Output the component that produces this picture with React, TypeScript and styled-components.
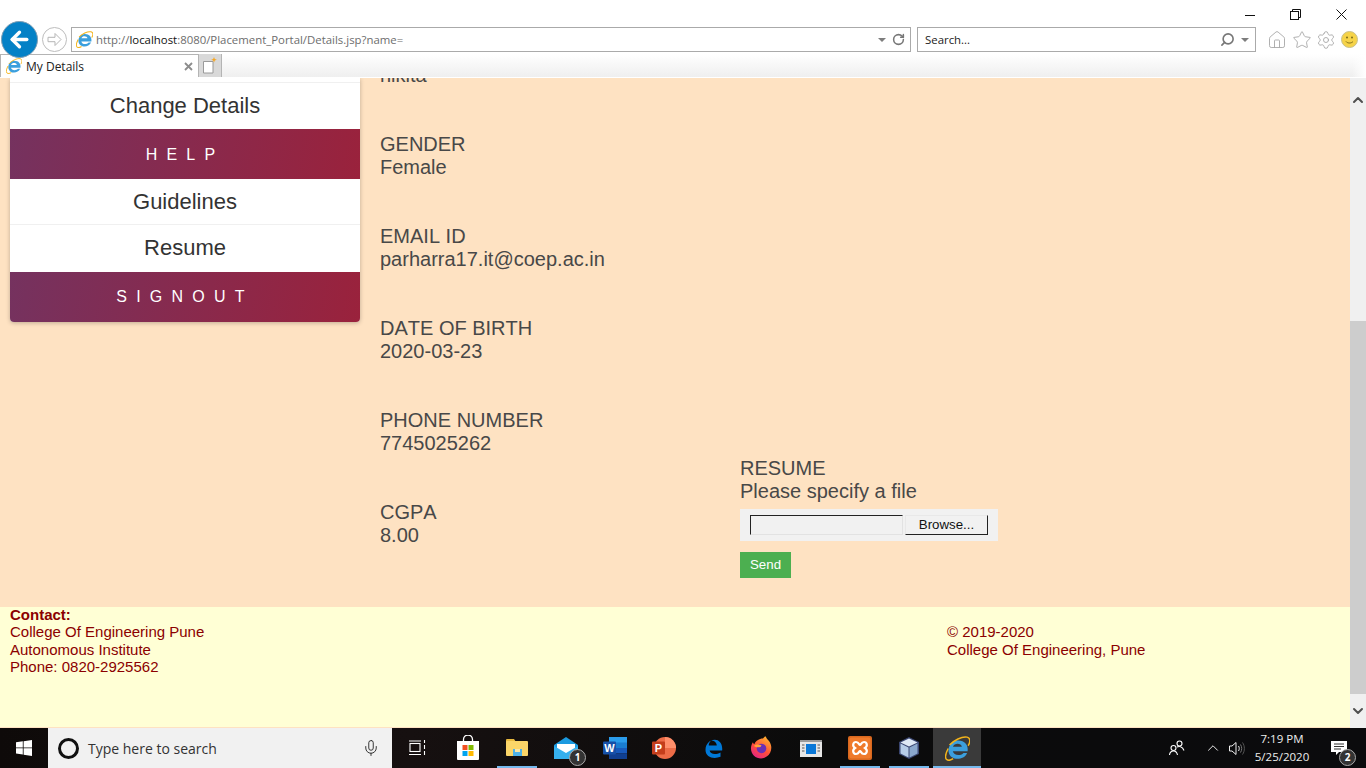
import styled, { createGlobalStyle } from 'styled-components';
import { ArrowLeft, ChevronDown, ChevronUp, House, Mic, RotateCw, Search, Settings, Star } from 'lucide-react';

const GlobalStyle = createGlobalStyle`
  html, body {
    margin: 0;
    padding: 0;
    height: 100%;
    overflow: hidden;
    background: #fff;
  }
  * { box-sizing: border-box; }
`;

const uiFont = `'Open Sans', 'Noto Sans', sans-serif`;
const pageFont = `'Liberation Sans', Arial, sans-serif`;

const Desktop = styled.div`
  width: 1366px;
  height: 768px;
  display: flex;
  flex-direction: column;
  overflow: hidden;
`;

/* browser chrome */
const TitleRow = styled.div`
  height: 27px;
  display: flex;
  justify-content: flex-end;
  padding-right: 2px;
  background: #fff;
`;

const WinButton = styled.div`
  width: 45.5px;
  height: 27px;
  display: flex;
  align-items: center;
  justify-content: center;
  padding-top: 2px;
`;

const NavRow = styled.div`
  height: 25px;
  display: flex;
  align-items: center;
  background: #fff;
  position: relative;
  z-index: 2;
`;

const BackButton = styled.div`
  width: 37px;
  height: 37px;
  margin: 0 4px 0 1px;
  border-radius: 50%;
  background: #0481c6;
  border: 1px solid #7f9fb5;
  display: flex;
  align-items: center;
  justify-content: center;
  color: #fff;
  flex: none;
`;

const ForwardButton = styled.div`
  width: 25px;
  height: 25px;
  margin-right: 4px;
  border-radius: 50%;
  border: 1px solid #bdbdbd;
  display: flex;
  align-items: center;
  justify-content: center;
  flex: none;
`;

const Field = styled.div<{ $width: number }>`
  width: ${(p) => p.$width}px;
  height: 25px;
  margin-right: 6px;
  border: 1px solid #aaa;
  background: #fff;
  display: flex;
  align-items: center;
  font: 11.4px ${uiFont};
  color: #6d6d6d;
  flex: none;
`;

const FieldIcon = styled.div`
  width: 24px;
  display: flex;
  justify-content: center;
  flex: none;
`;

const FieldText = styled.div`
  flex: 1;
  white-space: nowrap;
  strong { color: #111; font-weight: 400; }
`;

const SearchText = styled(FieldText)`
  color: #222;
  padding-left: 7px;
`;

const Caret = styled.span`
  width: 0;
  height: 0;
  border-left: 4px solid transparent;
  border-right: 4px solid transparent;
  border-top: 4px solid #7d7d7d;
  margin: 0 6px;
`;

const RefreshIcon = styled(RotateCw)`
  margin-right: 5px;
`;

const SearchIcon = styled(Search)`
  transform: scaleX(-1);
`;

const ToolIcons = styled.div`
  display: flex;
  align-items: center;
  gap: 4.5px;
  margin-left: 5px;
  color: #a9a9a9;
`;

const TabRow = styled.div`
  height: 24px;
  margin-top: 2px;
  display: flex;
  border-bottom: 1px solid #fff;
  background: linear-gradient(90deg, transparent 1352px, #fff 1366px), linear-gradient(#fff, #efefef);
`;

const Tab = styled.div`
  width: 199px;
  height: 23px;
  padding: 0 5px 0 5px;
  border-top: 1px solid #b4b4b4;
  border-right: 1px solid #b4b4b4;
  border-left: 1px solid #b4b4b4;
  background: #fff;
  display: flex;
  align-items: center;
  gap: 4px;
  font: 12px ${uiFont};
  color: #222;
`;

const TabTitle = styled.span`
  flex: 1;
`;

const NewTab = styled.div`
  width: 23px;
  height: 23px;
  background: #d9d9d9;
  border-right: 1px solid #b4b4b4;
  display: flex;
  align-items: center;
  justify-content: center;
`;

/* page */
const Viewport = styled.div`
  height: 650px;
  display: flex;
`;

const Page = styled.div`
  width: 1350px;
  display: flex;
  flex-direction: column;
  font-family: ${pageFont};
  font-kerning: none;
`;

const Main = styled.div`
  height: 529px;
  background: #fee2c2;
  display: flex;
  overflow: hidden;
  padding-left: 10px;
`;

const Sidebar = styled.nav`
  width: 350px;
  height: 244px;
  background: #fff;
  border-radius: 0 0 4px 4px;
  box-shadow: 0 1px 4px rgba(0, 0, 0, 0.25);
  display: flex;
  flex-direction: column;
  padding-top: 4px;
  flex: none;
`;

const SideLink = styled.div<{ $height: number; $line?: boolean; $lift?: number }>`
  height: ${(p) => p.$height}px;
  display: flex;
  align-items: center;
  justify-content: center;
  padding-bottom: ${(p) => p.$lift ?? 0}px;
  font-size: 22px;
  color: #333;
  border-top: ${(p) => (p.$line ? '1px solid #f0f0f0' : '0')};
`;

const SideHeader = styled.div<{ $last?: boolean }>`
  height: 50px;
  display: flex;
  align-items: center;
  justify-content: center;
  padding-top: ${(p) => (p.$last ? 0 : 1)}px;
  font-size: 16px;
  letter-spacing: 9.2px;
  color: #fff;
  background: linear-gradient(100deg, #75325f 0%, #9a223c 100%);
  border-radius: ${(p) => (p.$last ? '0 0 4px 4px' : '0')};
`;

const Details = styled.div`
  width: 360px;
  margin: -14px 0 0 20px;
  flex: none;
  font-size: 20px;
  line-height: 23px;
  color: #484848;
`;

const DetailGroup = styled.div`
  margin-bottom: 46px;
`;

const ResumeColumn = styled.div`
  align-self: flex-end;
  padding-bottom: 29px;
  font-size: 20px;
  line-height: 23px;
  color: #484848;
`;

const FileBox = styled.div`
  width: 258px;
  height: 32px;
  margin: 6px 0 11px;
  padding: 6px 10px;
  background: #f1f1f1;
  display: flex;
  gap: 2px;
`;

const FileName = styled.div`
  width: 153px;
  height: 20px;
  border: 1px solid #e2e2e2;
  border-top: 1px solid #222;
  border-left: 1px solid #222;
`;

const Browse = styled.div`
  width: 83px;
  height: 20px;
  border: 1px solid #e8e8e8;
  border-right: 1px solid #222;
  border-bottom: 1px solid #222;
  display: flex;
  align-items: center;
  justify-content: center;
  font-size: 13.3px;
  line-height: 1;
  color: #111;
`;

const SendButton = styled.div`
  width: 51px;
  height: 26px;
  padding-bottom: 2px;
  background: #4caf50;
  color: #fff;
  font-size: 13.3px;
  display: flex;
  align-items: center;
  justify-content: center;
`;

const Footer = styled.footer`
  height: 121px;
  background: #ffffd5;
  color: #8b0000;
  font-size: 15px;
  line-height: 17.3px;
  padding: 0 0 0 10px;
  display: flex;
  border-bottom: 1px solid #fee2c2;
`;

const FooterBlock = styled.div<{ $width?: number }>`
  width: ${(p) => (p.$width ? `${p.$width}px` : 'auto')};
  margin-top: -1px;
  flex: none;
`;

const ContactTitle = styled.div`
  font-weight: 700;
`;

const ScrollBar = styled.div`
  width: 16px;
  background: #f0f0f0;
  display: flex;
  flex-direction: column;
  align-items: center;
  color: #505050;
`;

const ScrollArrow = styled.div<{ $height: number }>`
  height: ${(p) => p.$height}px;
  display: flex;
  align-items: center;
  justify-content: center;
  flex: none;
`;

const ScrollGap = styled.div`
  flex: 1;
`;

const ScrollThumb = styled.div`
  width: 16px;
  height: 373px;
  background: #cdcdcd;
  flex: none;
`;

/* taskbar */
const Taskbar = styled.div`
  height: 40px;
  background: linear-gradient(90deg, #0e0a09, #161010 30%, #0b0b0b 60%, #0b0b0d);
  display: flex;
  align-items: stretch;
  color: #fff;
  font-family: ${uiFont};
`;

const StartButton = styled.div`
  width: 48px;
  display: flex;
  align-items: center;
  justify-content: center;
  flex: none;
`;

const SearchBox = styled.div`
  width: 344px;
  background: #f1f1f1;
  display: flex;
  align-items: center;
  padding: 0 12px 0 10px;
  color: #333;
  font-size: 14px;
  flex: none;
`;

const Cortana = styled.div`
  width: 21px;
  height: 21px;
  margin-right: 9px;
  border-radius: 50%;
  border: 3px solid #111;
`;

const SearchLabel = styled.span`
  flex: 1;
`;

const Slot = styled.div<{ $active?: boolean; $running?: boolean; $width?: number }>`
  width: ${(p) => p.$width ?? 49}px;
  display: flex;
  align-items: center;
  justify-content: center;
  flex: none;
  position: relative;
  background: ${(p) => (p.$active ? '#3a3a3a' : 'transparent')};
  &::after {
    content: '';
    display: ${(p) => (p.$running || p.$active ? 'block' : 'none')};
    position: absolute;
    left: ${(p) => (p.$active ? 0 : 5)}px;
    right: ${(p) => (p.$active ? 0 : 4)}px;
    bottom: 0;
    height: 2px;
    background: #76b9ed;
  }
`;

const IconBadge = styled.div`
  position: absolute;
  width: 17px;
  height: 17px;
  right: 4px;
  bottom: 2px;
  border-radius: 50%;
  background: #333;
  border: 1px solid #aaa;
  color: #fff;
  font-size: 10px;
  font-weight: 700;
  line-height: 15px;
  text-align: center;
`;

const Tray = styled.div`
  flex: 1;
  display: flex;
  align-items: center;
  padding-left: 183px;
`;

const TrayIcon = styled.div<{ $width: number; $gap?: number }>`
  width: ${(p) => p.$width}px;
  margin-left: ${(p) => p.$gap ?? 0}px;
  display: flex;
  justify-content: center;
  flex: none;
`;

const Clock = styled.div`
  width: 66px;
  margin-left: 1px;
  text-align: center;
  font-size: 11.5px;
  line-height: 18.5px;
  color: #eee;
  flex: none;
`;

const Notify = styled.div`
  width: 34px;
  height: 40px;
  margin-left: 7px;
  display: flex;
  align-items: center;
  justify-content: center;
  position: relative;
  flex: none;
`;

const NotifyBadge = styled(IconBadge)`
  right: 0;
  bottom: 2px;
`;

const IeLogo = ({ size = 18 }: { size?: number }) => (
  <svg width={size} height={size} viewBox="1 1 22 22">
    <path
      fillRule="evenodd"
      fill="#3b9fdd"
      transform="translate(-1.5 -1.8) scale(1.12)"
      d="M20 14.500H8.400c.5 3.200 5.600 4.200 8.400 1.300h2.800c-2.200 5-8.600 5.800-12.200 3.200C3.200 15.600 4.600 6.600 12 6c5.300-.3 8.800 3.300 8 8.500zM8.500 11h7c-.3-3-6.200-3.200-7 0z"
    />
    <path
      fill="none"
      stroke="#f3b41b"
      strokeWidth="1.300"
      d="M5 9C8.500 5 16 1 20.500 2c3.500.8 2.500 5.500.8 7.500M3.800 12C2 15.500.5 19.500 2.200 21.500c1.500 1.500 4 .8 6-.5"
    />
  </svg>
);

const WinLogo = () => (
  <svg width="16" height="16" viewBox="0 0 16 16" fill="#fff">
    <path d="M0 2.300 6.800 1.300V7.500H0zM7.600 1.200 16 0V7.500H7.600zM0 8.300H6.800V14.600L0 13.600zM7.600 8.300H16V16L7.600 14.800z" />
  </svg>
);

const ForwardArrow = () => (
  <svg width="17" height="17" viewBox="0 0 17 17" fill="none" stroke="#b5b5b5">
    <path d="M9 2.500l6 6-6 6v-3.800H2V6.300h7z" />
  </svg>
);

const TaskView = () => (
  <svg width="17" height="16" viewBox="0 0 17 16" fill="none" stroke="#fff" strokeWidth="1.100">
    <rect x="1" y="3.500" width="10" height="8" />
    <path d="M0 1h12M0 14.500h12M15.500 0v3M15.500 5v4M15.500 11v4" />
  </svg>
);

const StoreIcon = () => (
  <svg width="24" height="26" viewBox="0 0 24 26">
    <path d="M7.500 6V4.500a4.500 4.500 0 0 1 9 0V6" fill="none" stroke="#fff" strokeWidth="1.300" />
    <path d="M1 6h22v18a1 1 0 0 1-1 1H2a1 1 0 0 1-1-1z" fill="#fff" />
    <rect x="6.500" y="10" width="5" height="5" fill="#f25022" />
    <rect x="12.500" y="10" width="5" height="5" fill="#7fba00" />
    <rect x="6.500" y="16" width="5" height="5" fill="#00a4ef" />
    <rect x="12.500" y="16" width="5" height="5" fill="#ffb900" />
  </svg>
);

const FolderIcon = () => (
  <svg width="22" height="20" viewBox="0 0 22 20">
    <path d="M0 2a1 1 0 0 1 1-1h7l2 3h-10z" fill="#e8b93f" />
    <rect x="0" y="3" width="22" height="15" rx="1" fill="#fbd568" />
    <rect x="7" y="11" width="9" height="7" fill="#4fb2e8" />
    <rect x="9" y="11" width="5" height="3" fill="#fbe6a5" />
  </svg>
);

const MailIcon = () => (
  <svg width="24" height="22" viewBox="0 0 24 22">
    <path d="M0 8 12 0l12 8v14H0z" fill="#1b9ae0" />
    <path d="M3 7h18v7l-9 4-9-4z" fill="#fff" />
    <path d="M0 9l12 7 12-7v13H0z" fill="#36b0ee" />
  </svg>
);

const WordIcon = () => (
  <svg width="24" height="22" viewBox="0 0 24 22">
    <rect x="6" y="0" width="18" height="6" fill="#2b9ceb" />
    <rect x="6" y="5.500" width="18" height="5.500" fill="#1a7dd1" />
    <rect x="6" y="11" width="18" height="5.500" fill="#185abd" />
    <rect x="6" y="16.500" width="18" height="5.500" fill="#103f91" />
    <rect x="0" y="4.500" width="13" height="13" rx="1" fill="#1650a8" />
    <text x="6.500" y="15" textAnchor="middle" fill="#fff" fontSize="11" fontWeight="700" fontFamily={pageFont}>W</text>
  </svg>
);

const PowerPointIcon = () => (
  <svg width="24" height="22" viewBox="0 0 24 22">
    <circle cx="13" cy="11" r="11" fill="#ed6c47" />
    <path d="M13 0a11 11 0 0 1 11 11H13z" fill="#ff8f6b" />
    <rect x="0" y="4.500" width="13" height="13" rx="1" fill="#c43e1c" />
    <text x="6.500" y="15" textAnchor="middle" fill="#fff" fontSize="11" fontWeight="700" fontFamily={pageFont}>P</text>
  </svg>
);

const EdgeIcon = () => (
  <svg width="20" height="21" viewBox="0 0 24 24">
    <path
      fillRule="evenodd"
      fill="#0078d7"
      d="M23 14.500H8c.4 4.500 7.500 5.500 13 2.200v5.200c-8 3.200-18 1-18-8.400C3 6 9.500 2.500 9.500 2.500S6.500 6 7 8.500h9.500C16.500 4 12 2.500 9.500 2.500 17-1 24 4 23 14.500z"
    />
  </svg>
);

const FirefoxIcon = () => (
  <svg width="23" height="24" viewBox="0 0 24 24">
    <defs>
      <linearGradient id="fx" x1="0.8" y1="0" x2="0.2" y2="1">
        <stop offset="0" stopColor="#ffb52e" />
        <stop offset="0.55" stopColor="#ff4f3a" />
        <stop offset="1" stopColor="#e3208a" />
      </linearGradient>
    </defs>
    <path d="M12 2c3 .5 2-2 4.500-2 .5 2 2 3 3.500 5 2.500 3.500 3 8 1 12-2 3.500-5.500 6-9.500 6C6 23 1 18.500 1 12.500 1 10 2 7.500 3 6c.3 1 .8 1.500 1.500 2C5.500 5 8 3 12 2z" fill="url(#fx)" />
    <circle cx="12" cy="12.500" r="5" fill="#6a2fb5" />
    <path d="M4 10c2-2 5-2 8-1l-1 2c-3 .5-5 .5-7-1z" fill="#ffa436" />
  </svg>
);

const NewsIcon = () => (
  <svg width="22" height="17" viewBox="0 0 22 17">
    <rect width="22" height="17" fill="#e6e6e6" />
    <rect x="0" y="0" width="22" height="2" fill="#9a9a9a" />
    <rect x="6" y="4" width="10" height="10" fill="#0a78d8" />
    <path d="M2 5h2.500M2 8h2.500M2 11h2.500M17.500 5H20M17.500 8H20M17.500 11H20" stroke="#555" strokeWidth="1" />
  </svg>
);

const XamppIcon = () => (
  <svg width="24" height="24" viewBox="0 0 24 24">
    <rect width="24" height="24" rx="2" fill="#d9681f" />
    <rect x="1.500" y="1.500" width="21" height="21" rx="2" fill="#ef7a2b" />
    <path
      d="M8 6c3 0 3 3 4 3s1-3 4-3 4 4 1 6c3 2 2 6-1 6s-3-3-4-3-1 3-4 3-4-4-1-6c-3-2-2-6 1-6z"
      fill="none"
      stroke="#fff"
      strokeWidth="2.200"
    />
  </svg>
);

const CubeIcon = () => (
  <svg width="22" height="24" viewBox="0 0 22 24">
    <path d="M11 1 21 6v12l-10 5-10-5V6z" fill="#3a4670" />
    <path d="M11 2.500 19.500 6.500 11 10.500 2.500 6.500z" fill="#dfe9f5" />
    <path d="M2.500 7.500 10.500 11.500v10L2.500 17.500z" fill="#b7cde8" />
    <path d="M19.500 7.500 11.500 11.500v10l8-4z" fill="#8ba8cc" />
  </svg>
);

const PeopleIcon = () => (
  <svg width="16" height="16" viewBox="0 0 16 16" fill="none" stroke="#fff" strokeWidth="1.100">
    <circle cx="4.500" cy="8" r="2.500" />
    <path d="M.5 15c.3-2.500 2-4 4-4s3.500 1.500 4 4" />
    <circle cx="10.500" cy="3.500" r="2.500" />
    <path d="M8 7c1.800-.8 5.500-1 7 3.500" />
  </svg>
);

const SpeakerIcon = () => (
  <svg width="17" height="15" viewBox="0 0 17 15" fill="none" stroke="#eee" strokeWidth="1">
    <path d="M.5 5h2.500L7 1.500v12L3 10H.5z" />
    <path d="M9.500 5c1 1.500 1 3.500 0 5" />
    <path d="M11.500 3.500c1.600 2.500 1.600 5.500 0 8" stroke="#777" />
    <path d="M13.500 1.500c2.500 3.500 2.500 8.500 0 12" stroke="#555" />
  </svg>
);

const MessageIcon = () => (
  <svg width="17" height="14" viewBox="0 0 17 14">
    <path d="M0 0h16v11H8l-3 3v-3H0z" fill="#fff" />
    <path d="M3 3h10M3 5.500h10M3 8h7" stroke="#333" strokeWidth="1" />
  </svg>
);

const SmileIcon = () => (
  <svg width="17" height="17" viewBox="0 0 17 17">
    <circle cx="8.500" cy="8.500" r="8" fill="#f6d348" stroke="#c9c08a" />
    <circle cx="6" cy="6.500" r="1" fill="#7a6a1a" />
    <circle cx="11" cy="6.500" r="1" fill="#7a6a1a" />
    <path d="M5 10.500c1.500 2 5.500 2 7 0" fill="none" stroke="#7a6a1a" strokeWidth="1" />
  </svg>
);

const NewPageIcon = () => (
  <svg width="16" height="17" viewBox="0 0 16 17">
    <path d="M1.500 4.500h9.500v11.500H1.500z" fill="#fff" stroke="#9a9a9a" />
    <path d="M12 0l.8 2 2 .8-2 .8-.8 2-.8-2-2-.8 2-.8z" fill="#f6a623" />
  </svg>
);

const details = [
  ['', 'nikita'],
  ['GENDER', 'Female'],
  ['EMAIL ID', 'parharra17.it@coep.ac.in'],
  ['DATE OF BIRTH', '2020-03-23'],
  ['PHONE NUMBER', '7745025262'],
  ['CGPA', '8.00'],
];

const App = () => {
  return (
    <Desktop>
      <GlobalStyle />
      <TitleRow>
        <WinButton>
          <svg width="10" height="10" viewBox="0 0 10 10"><path d="M0 5.500h10" stroke="#111" /></svg>
        </WinButton>
        <WinButton>
          <svg width="11" height="11" viewBox="0 0 11 11" fill="none" stroke="#111">
            <rect x=".5" y="2.500" width="8" height="8" />
            <path d="M2.500 2.500v-2h8v8h-2" />
          </svg>
        </WinButton>
        <WinButton>
          <svg width="11" height="11" viewBox="0 0 11 11"><path d="M.5.500l10 10M10.500.500l-10 10" stroke="#111" /></svg>
        </WinButton>
      </TitleRow>

      <NavRow>
        <BackButton><ArrowLeft size={25} strokeWidth={3.2} /></BackButton>
        <ForwardButton><ForwardArrow /></ForwardButton>
        <Field $width={840}>
          <FieldIcon><IeLogo size={17} /></FieldIcon>
          <FieldText>http://<strong>localhost</strong>:8080/Placement_Portal/Details.jsp?name=</FieldText>
          <Caret />
          <RefreshIcon size={13} strokeWidth={2.8} color="#777" />
        </Field>
        <Field $width={339}>
          <SearchText>Search...</SearchText>
          <SearchIcon size={15} strokeWidth={2.6} color="#777" />
          <Caret />
        </Field>
        <ToolIcons>
          <House size={20} strokeWidth={1.1} />
          <Star size={20} strokeWidth={1.1} />
          <Settings size={20} strokeWidth={1.1} />
          <SmileIcon />
        </ToolIcons>
      </NavRow>

      <TabRow>
        <Tab>
          <IeLogo size={16} />
          <TabTitle>My Details</TabTitle>
          <svg width="9" height="9" viewBox="0 0 9 9">
            <path d="M1 1l7 7M8 1l-7 7" stroke="#8c8c8c" strokeWidth="1.800" />
          </svg>
        </Tab>
        <NewTab><NewPageIcon /></NewTab>
      </TabRow>

      <Viewport>
        <Page>
          <Main>
            <Sidebar>
              <SideLink $height={47} $line>Change Details</SideLink>
              <SideHeader>HELP</SideHeader>
              <SideLink $height={45}>Guidelines</SideLink>
              <SideLink $height={48} $line $lift={2}>Resume</SideLink>
              <SideHeader $last>SIGNOUT</SideHeader>
            </Sidebar>
            <Details>
              {details.map(([label, value]) => (
                <DetailGroup key={value}>
                  {label && <div>{label}</div>}
                  <div>{value}</div>
                </DetailGroup>
              ))}
            </Details>
            <ResumeColumn>
              <div>RESUME</div>
              <div>Please specify a file</div>
              <FileBox>
                <FileName />
                <Browse>Browse...</Browse>
              </FileBox>
              <SendButton>Send</SendButton>
            </ResumeColumn>
          </Main>
          <Footer>
            <FooterBlock $width={937}>
              <ContactTitle>Contact:</ContactTitle>
              <div>College Of Engineering Pune</div>
              <div>Autonomous Institute</div>
              <div>Phone: 0820-2925562</div>
            </FooterBlock>
            <FooterBlock>
              <div>&nbsp;</div>
              <div>© 2019-2020</div>
              <div>College Of Engineering, Pune</div>
            </FooterBlock>
          </Footer>
        </Page>
        <ScrollBar>
          <ScrollArrow $height={44}><ChevronUp size={16} strokeWidth={3} /></ScrollArrow>
          <ScrollGap />
          <ScrollThumb />
          <ScrollArrow $height={34}><ChevronDown size={16} strokeWidth={3} /></ScrollArrow>
        </ScrollBar>
      </Viewport>

      <Taskbar>
        <StartButton><WinLogo /></StartButton>
        <SearchBox>
          <Cortana />
          <SearchLabel>Type here to search</SearchLabel>
          <Mic size={18} strokeWidth={1.2} color="#222" />
        </SearchBox>
        <Slot $width={51}><TaskView /></Slot>
        <Slot><StoreIcon /></Slot>
        <Slot $running><FolderIcon /></Slot>
        <Slot><MailIcon /><IconBadge>1</IconBadge></Slot>
        <Slot><WordIcon /></Slot>
        <Slot><PowerPointIcon /></Slot>
        <Slot><EdgeIcon /></Slot>
        <Slot><FirefoxIcon /></Slot>
        <Slot><NewsIcon /></Slot>
        <Slot $running><XamppIcon /></Slot>
        <Slot $running><CubeIcon /></Slot>
        <Slot $active $width={48}><IeLogo size={25} /></Slot>
        <Tray>
          <TrayIcon $width={26}><PeopleIcon /></TrayIcon>
          <TrayIcon $width={26} $gap={10}><ChevronUp size={18} strokeWidth={1.2} /></TrayIcon>
          <TrayIcon $width={22}><SpeakerIcon /></TrayIcon>
          <Clock>
            <div>7:19 PM</div>
            <div>5/25/2020</div>
          </Clock>
          <Notify>
            <MessageIcon />
            <NotifyBadge>2</NotifyBadge>
          </Notify>
        </Tray>
      </Taskbar>
    </Desktop>
  );
};

export default App;
